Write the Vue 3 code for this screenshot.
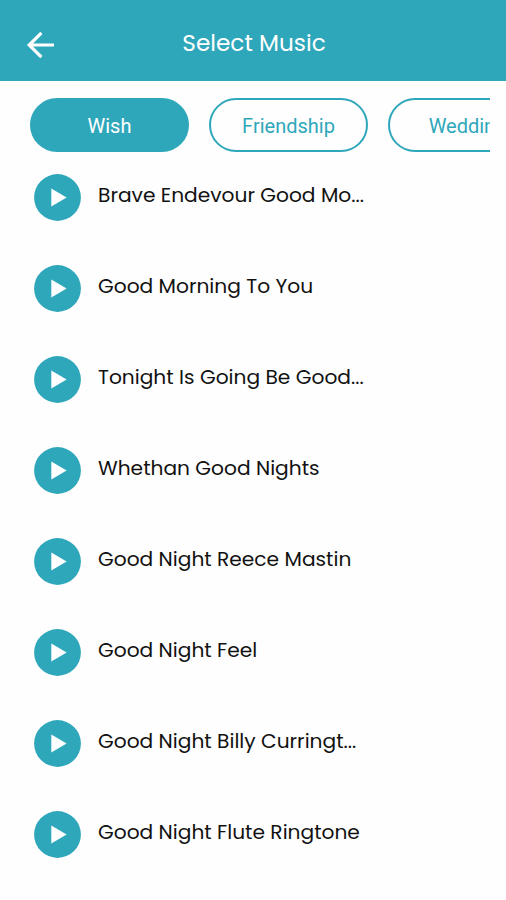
<script setup>
import { ref } from 'vue'

const categories = ['Wish', 'Friendship', 'Wedding']
const activeCategory = ref('Wish')
const playing = ref(null)

const songs = [
  { id: 1, title: 'Brave Endevour Good Mo...' },
  { id: 2, title: 'Good Morning To You' },
  { id: 3, title: 'Tonight Is Going Be Good...' },
  { id: 4, title: 'Whethan Good Nights' },
  { id: 5, title: 'Good Night Reece Mastin' },
  { id: 6, title: 'Good Night Feel' },
  { id: 7, title: 'Good Night Billy Curringt...' },
  { id: 8, title: 'Good Night Flute Ringtone' }
]

const togglePlay = (song) => {
  playing.value = playing.value === song.id ? null : song.id
}
</script>

<template>
  <div class="screen">
    <header class="header">
      <button class="back" aria-label="Back">
        <svg width="28" height="28" viewBox="0 0 28 28">
          <path d="M28 14H3.5M15.4 1.8L3.2 14l12.2 12.2" />
        </svg>
      </button>
      <h1 class="heading">Select Music</h1>
    </header>

    <nav class="tabs">
      <button
        v-for="category in categories"
        :key="category"
        class="tab"
        :class="{ active: category === activeCategory }"
        @click="activeCategory = category"
      >
        {{ category }}
      </button>
    </nav>

    <ul class="songs">
      <li v-for="song in songs" :key="song.id" class="song">
        <button class="play" :aria-pressed="playing === song.id" @click="togglePlay(song)">
          <svg width="47" height="47" viewBox="0 0 47 47">
            <circle cx="23.5" cy="23.5" r="23.4" />
            <path d="M17.3 14.5v18L32.6 23.5z" />
          </svg>
        </button>
        <span class="title">{{ song.title }}</span>
      </li>
    </ul>
  </div>
</template>

<style>
body {
  background: #fefefe;
}
</style>

<style scoped>
.screen {
  width: 506px;
  height: 900px;
  overflow: hidden;
  background: #fefefe;
  font-family: Poppins, Inter, sans-serif;
}

button {
  padding: 0;
  border: none;
  background: none;
  cursor: pointer;
}

.header {
  display: grid;
  grid-template-columns: 80px 1fr 78px;
  align-items: center;
  box-sizing: border-box;
  height: 81px;
  padding-top: 5px;
  background: #2fa7bb;
}

.back {
  display: flex;
  width: 28px;
  margin: 3px 0 0 26px;
}

.back path {
  fill: none;
  stroke: #fff;
  stroke-width: 3.2;
}

.heading {
  margin: 0;
  color: #fff;
  font-size: 23.2px;
  font-weight: 400;
  line-height: 30px;
  text-align: center;
}

.tabs {
  display: flex;
  gap: 20px;
  margin: 17px 16px 0 30px;
  overflow: hidden;
}

.tab {
  flex: none;
  box-sizing: border-box;
  width: 159px;
  height: 54px;
  padding-top: 2px;
  border: 2px solid #2fa7bb;
  border-radius: 27px;
  color: #2fa7bb;
  font-family: Roboto, sans-serif;
  font-size: 20px;
}

.tab.active {
  background: #2fa7bb;
  color: #fff;
}

.songs {
  margin: 22px 0 0;
  padding: 0 0 0 34px;
  list-style: none;
}

.song {
  display: flex;
  align-items: flex-start;
  gap: 17px;
  height: 91px;
}

.play {
  display: flex;
}

.play circle {
  fill: #2fa7bb;
}

.play path {
  fill: #fff;
}

.title {
  margin-top: 6px;
  color: #111;
  font-size: 20.2px;
  line-height: 31px;
  white-space: nowrap;
}
</style>
